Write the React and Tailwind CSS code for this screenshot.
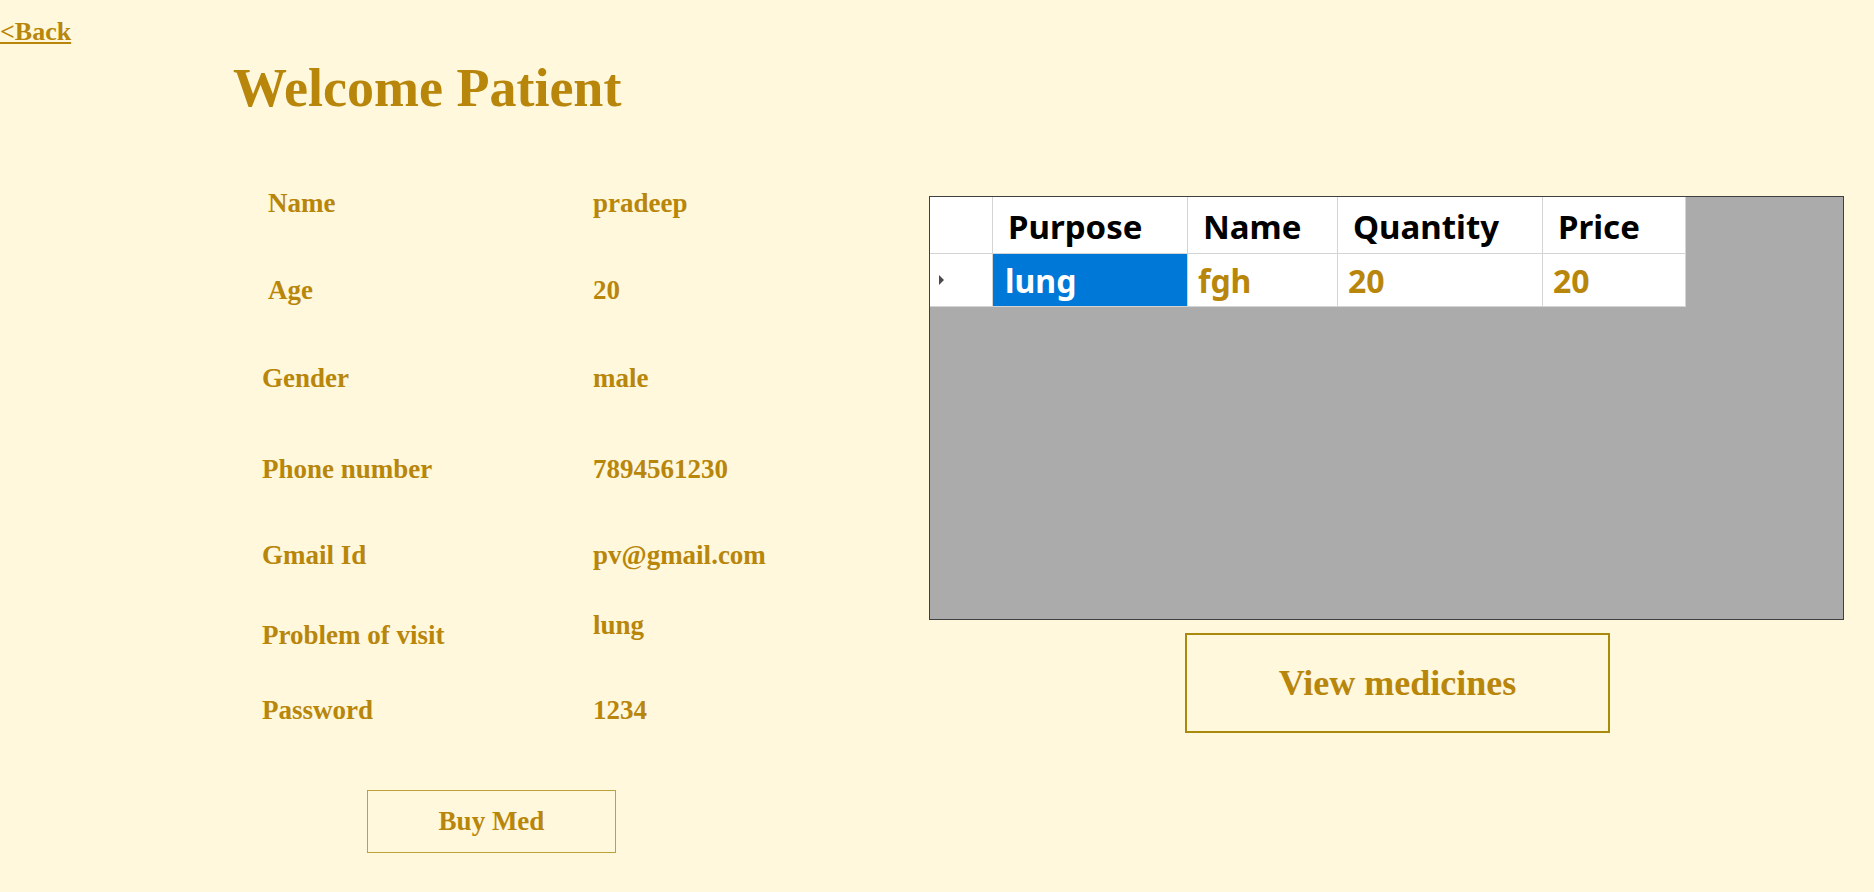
import React from 'react';

const rows = [
  { label: 'Name', value: 'pradeep', gap: 'mt-0', indent: true },
  { label: 'Age', value: '20', gap: 'mt-[60px]', indent: true },
  { label: 'Gender', value: 'male', gap: 'mt-[61px]' },
  { label: 'Phone number', value: '7894561230', gap: 'mt-[64px]' },
  { label: 'Gmail Id', value: 'pv@gmail.com', gap: 'mt-[59px]' },
  { label: 'Problem of visit', value: 'lung', gap: 'mt-[43px]', drop: true },
  { label: 'Password', value: '1234', gap: 'mt-[48px]' },
];

const medicines = [{ purpose: 'lung', name: 'fgh', quantity: '20', price: '20' }];

const headerCell = 'h-[57px] bg-white border-r border-b border-[#d4d4d4] pt-[13px] pl-[15px] text-[33px] leading-none font-bold text-black';
const dataCell = 'h-[53px] bg-white border-r border-b border-[#d4d4d4] pt-[11px] pl-[10px] text-[32px] leading-none font-bold text-[#b8860b]';

const App = () => {
  return (
    <div className="min-h-screen w-full bg-[#fff8dc] text-[#b8860b] font-['Liberation_Serif',serif] font-bold">
      {/* Back link */}
      <div className="pt-[19px]">
        <a href="#" className="text-[26px] leading-none underline">&lt;Back</a>
      </div>

      <h1 className="mt-[14px] ml-[233px] text-[54px] leading-none font-bold">Welcome Patient</h1>

      <div className="mt-[75px] pl-[262px] flex">
        {/* Patient details */}
        <div className="w-[667px] shrink-0 flex flex-col">
          {rows.map((row) => (
            <div key={row.label} className={`${row.gap} flex items-start text-[27px] leading-[27px]`}>
              <div className={`w-[331px] shrink-0 ${row.indent ? 'pl-[6px]' : ''} ${row.drop ? 'pt-[10px]' : ''}`}>
                {row.label}
              </div>
              <div>{row.value}</div>
            </div>
          ))}

          <button className="mt-[66px] ml-[105px] w-[249px] h-[63px] border border-[#bda23a] text-[27px] leading-none font-bold text-[#b8860b]">
            Buy Med
          </button>
        </div>

        {/* Medicines grid */}
        <div className="flex flex-col mt-[6px]">
          <div className="w-[915px] h-[424px] border border-[#404040] bg-[#ababab] font-['Noto_Sans',sans-serif]">
            <div className="grid grid-cols-[63px_195px_150px_205px_143px] w-max">
              <div className="h-[57px] bg-white border-r border-b border-[#d4d4d4]"></div>
              <div className={headerCell}>Purpose</div>
              <div className={headerCell}>Name</div>
              <div className={headerCell}>Quantity</div>
              <div className={headerCell}>Price</div>

              {medicines.map((med) => (
                <React.Fragment key={med.name}>
                  <div className="h-[53px] bg-white border-r border-b border-[#d4d4d4] flex items-center pl-[9px]">
                    <svg width="6" height="10" viewBox="0 0 6 10">
                      <path d="M0 0 L5 5 L0 10 Z" fill="#4a4a4a" />
                    </svg>
                  </div>
                  <div className="h-[53px] bg-[#0078d7] border-r border-b border-[#d4d4d4] pt-[11px] pl-[12px] text-[32px] leading-none font-bold text-white">
                    {med.purpose}
                  </div>
                  <div className={dataCell}>{med.name}</div>
                  <div className={dataCell}>{med.quantity}</div>
                  <div className={dataCell}>{med.price}</div>
                </React.Fragment>
              ))}
            </div>
          </div>

          <button className="mt-[13px] ml-[256px] w-[425px] h-[100px] border-2 border-[#a98a0c] text-[36px] leading-none font-bold text-[#b8860b] font-['Liberation_Serif',serif]">
            View medicines
          </button>
        </div>
      </div>
    </div>
  );
};

export default App;
